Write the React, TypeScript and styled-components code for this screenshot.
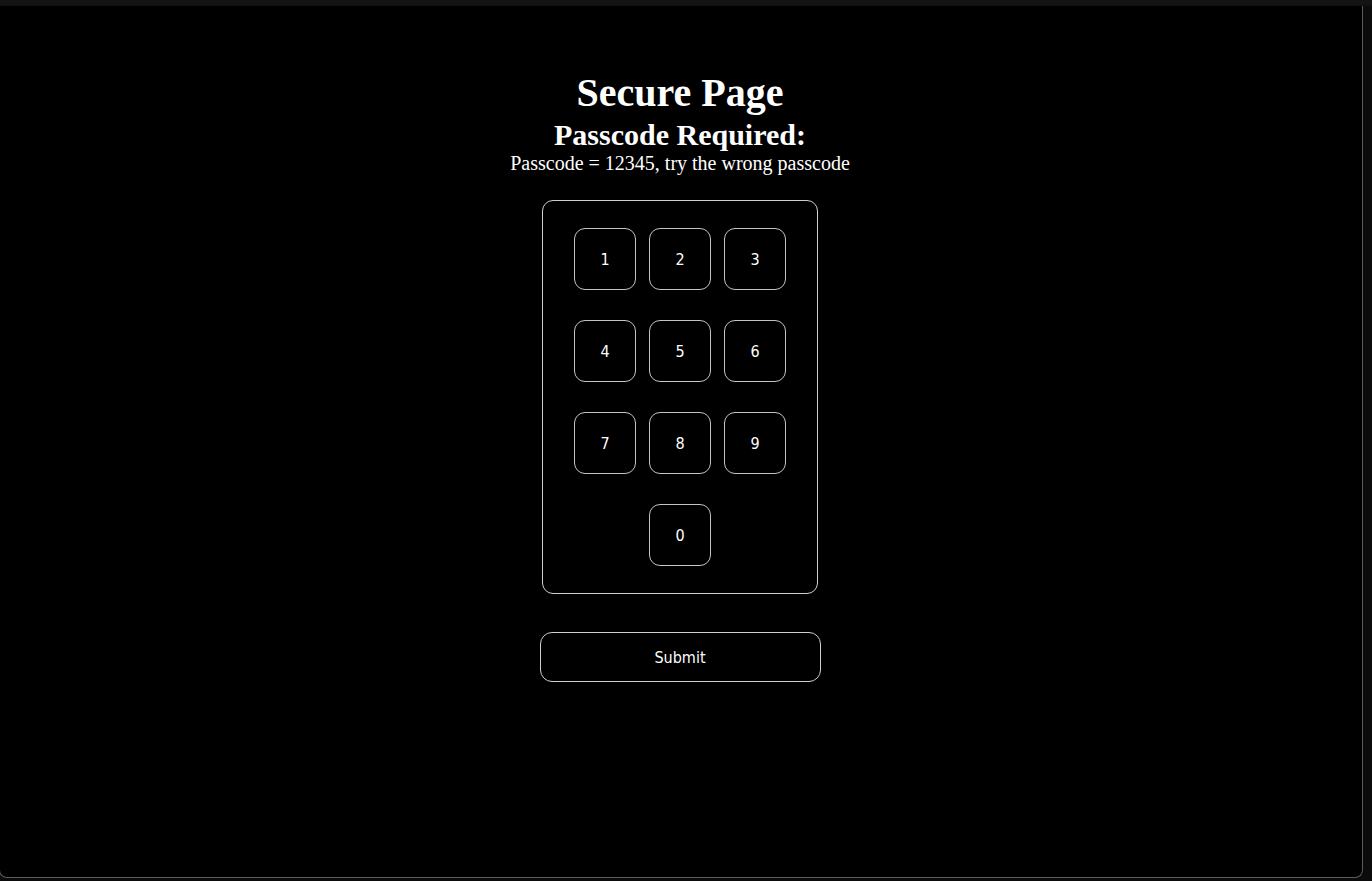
import React from "react";
import styled, { createGlobalStyle } from "styled-components";

const Global = createGlobalStyle`
  html, body {
    margin: 0;
    padding: 0;
    background: #0b0b0b;
    overflow: hidden;
  }
  * { box-sizing: border-box; }
`;

const Screen = styled.div`
  width: 1372px;
  height: 881px;
  display: flex;
  flex-direction: column;
  background: #0b0b0b;
  overflow: hidden;
`;

const TopStrip = styled.div`
  height: 6px;
  flex: none;
  background: #141414;
  border-bottom: 1px solid #101010;
`;

const Viewport = styled.main`
  width: 1364px;
  height: 872px;
  margin-left: -1px;
  flex: none;
  background: #000;
  border: 1px solid #5c5c5c;
  border-top: none;
  border-radius: 0 0 8px 8px;
  display: flex;
  flex-direction: column;
  align-items: center;
  padding: 63px 2px 0 0;
  color: #fff;
  font-family: "Liberation Serif", "Times New Roman", serif;
`;

const Title = styled.h1`
  margin: 0;
  font-size: 40px;
  font-weight: bold;
  line-height: normal;
`;

const Subtitle = styled.h2`
  margin: 2px 0 0;
  font-size: 30px;
  font-weight: bold;
  line-height: normal;
`;

const Hint = styled.p`
  margin: 0;
  font-size: 20px;
  line-height: normal;
`;

const Keypad = styled.div`
  margin-top: 25px;
  width: 276px;
  padding: 27px 31px;
  border: 1px solid #cfcfcf;
  border-radius: 11px;
  display: grid;
  grid-template-columns: repeat(3, 62px);
  grid-auto-rows: 62px;
  column-gap: 13px;
  row-gap: 30px;
`;

const Key = styled.button<{ $col?: number }>`
  grid-column: ${(p) => (p.$col ? `${p.$col}` : "auto")};
  width: 62px;
  height: 62px;
  padding: 0;
  background: #000;
  color: #fff;
  border: 1px solid #c4c4c4;
  border-radius: 11px;
  font-family: "DejaVu Sans Condensed", "DejaVu Sans", Verdana, sans-serif;
  font-size: 16px;
  display: flex;
  align-items: center;
  justify-content: center;
  cursor: pointer;
`;

const Submit = styled.button`
  margin-top: 38px;
  width: 281px;
  height: 50px;
  background: #000;
  color: #fff;
  border: 1px solid #d0d0d0;
  border-radius: 12px;
  font-family: "DejaVu Sans Condensed", "DejaVu Sans", Verdana, sans-serif;
  font-size: 16px;
  cursor: pointer;
`;

const digits = ["1", "2", "3", "4", "5", "6", "7", "8", "9"];

export default function App() {
  return (
    <Screen>
      <Global />
      <TopStrip />
      <Viewport>
        <Title>Secure Page</Title>
        <Subtitle>Passcode Required:</Subtitle>
        <Hint>Passcode = 12345, try the wrong passcode</Hint>
        <Keypad>
          {digits.map((d) => (
            <Key key={d}>{d}</Key>
          ))}
          <Key $col={2}>0</Key>
        </Keypad>
        <Submit>Submit</Submit>
      </Viewport>
    </Screen>
  );
}
